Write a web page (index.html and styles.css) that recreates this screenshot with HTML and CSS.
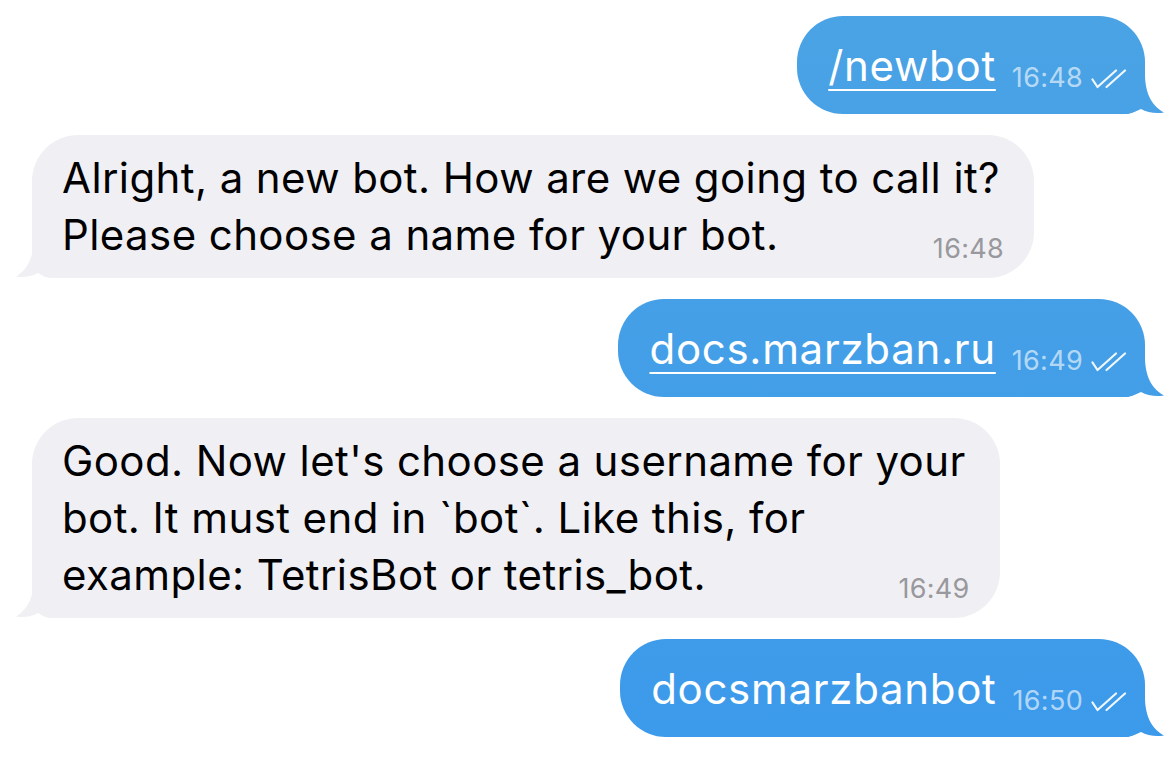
FILE: index.html
```html
<!DOCTYPE html>
<html lang="en">
<head>
<meta charset="utf-8">
<title>Chat</title>
<link rel="stylesheet" href="styles.css">
</head>
<body>
<main class="chat">
  <div class="row row-out">
    <div class="bubble out">
      <a class="msg-text link" href="#">/newbot</a>
      <span class="meta">
        <span class="time">16:48</span>
        <svg class="checks" viewBox="0 0 36 20" width="36" height="20" aria-hidden="true"><path d="M1.5 10.5 L6.5 18 L25 1.5 M15.5 18 L34 1.5"/></svg>
      </span>
    </div>
  </div>
  <div class="row row-in">
    <div class="bubble in">
      <p class="msg-text">Alright, a new bot. How are we going to call it?<br>Please choose a name for your bot.</p>
      <div class="time">16:48</div>
    </div>
  </div>
  <div class="row row-out">
    <div class="bubble out">
      <a class="msg-text link" href="#">docs.marzban.ru</a>
      <span class="meta">
        <span class="time">16:49</span>
        <svg class="checks" viewBox="0 0 36 20" width="36" height="20" aria-hidden="true"><path d="M1.5 10.5 L6.5 18 L25 1.5 M15.5 18 L34 1.5"/></svg>
      </span>
    </div>
  </div>
  <div class="row row-in">
    <div class="bubble in">
      <p class="msg-text">Good. Now let's choose a username for your<br>bot. It must end in `bot`. Like this, for<br>example: TetrisBot or tetris_bot.</p>
      <div class="time">16:49</div>
    </div>
  </div>
  <div class="row row-out">
    <div class="bubble out">
      <span class="msg-text">docsmarzbanbot</span>
      <span class="meta">
        <span class="time">16:50</span>
        <svg class="checks" viewBox="0 0 36 20" width="36" height="20" aria-hidden="true"><path d="M1.5 10.5 L6.5 18 L25 1.5 M15.5 18 L34 1.5"/></svg>
      </span>
    </div>
  </div>
</main>
</body>
</html>
```
FILE: styles.css
```css
* { box-sizing: border-box; }

html, body {
  margin: 0;
  background: #ffffff;
}

body {
  font-family: Inter, "Noto Sans", "Liberation Sans", sans-serif;
  color: #000;
  -webkit-font-smoothing: antialiased;
}

.chat {
  display: flex;
  flex-direction: column;
  gap: 21px;
  padding: 16px 30px 0 32px;
}

.row { display: flex; }
.row-out { justify-content: flex-end; }
.row-in { justify-content: flex-start; }

.bubble {
  position: relative;
  border-radius: 46px;
}

.msg-text {
  margin: 0;
  font-size: 42px;
  line-height: 57px;
  letter-spacing: 0.4px;
}

/* outgoing */
.bubble.out {
  display: flex;
  align-items: flex-end;
  padding: 21px 18px 20px 31px;
  border-bottom-right-radius: 20px;
  background: linear-gradient(180deg, #4aa3e4 0%, #3c9aeb 100%) fixed;
  color: #fff;
}

.bubble.out .msg-text {
  letter-spacing: 0.7px;
}

.bubble.out::after {
  content: "";
  position: absolute;
  right: -19px;
  bottom: 0;
  width: 41px;
  height: 40px;
  background: linear-gradient(180deg, #4aa3e4 0%, #3c9aeb 100%) fixed;
  clip-path: path("M0 0 H22 C22 16, 27 31, 41 38.5 C33 40, 24 38.5, 18 35 C12 38, 6 40, 0 40 Z");
}

.link {
  color: #fff;
  text-decoration: underline;
  text-decoration-thickness: 2px;
  text-underline-offset: 8px;
}

.meta {
  display: flex;
  align-items: flex-end;
  gap: 8px;
  margin-left: 16px;
  margin-bottom: 3px;
}

.bubble.out .time {
  font-size: 27px;
  line-height: 27px;
  letter-spacing: 0.3px;
  color: rgba(255, 255, 255, 0.62);
}

.checks {
  display: block;
  margin-bottom: 2px;
  fill: none;
  stroke: rgba(255, 255, 255, 0.92);
  stroke-width: 2.2;
  stroke-linecap: round;
  stroke-linejoin: round;
}

/* incoming */
.bubble.in {
  padding: 14px 34px 16px 30px;
  border-bottom-left-radius: 20px;
  background: #f0f0f4;
}

.bubble.in::after {
  content: "";
  position: absolute;
  left: -16px;
  bottom: 0;
  width: 40px;
  height: 40px;
  background: #f0f0f4;
  clip-path: path("M40 0 H18 C18 16, 13 31, 0 38.5 C7 40, 16 38.5, 22 35 C28 38, 34 40, 40 40 Z");
}

.bubble.in .time {
  margin-top: -28px;
  margin-right: -4px;
  font-size: 27px;
  line-height: 27px;
  letter-spacing: 0.3px;
  text-align: right;
  color: #98989d;
}
```
